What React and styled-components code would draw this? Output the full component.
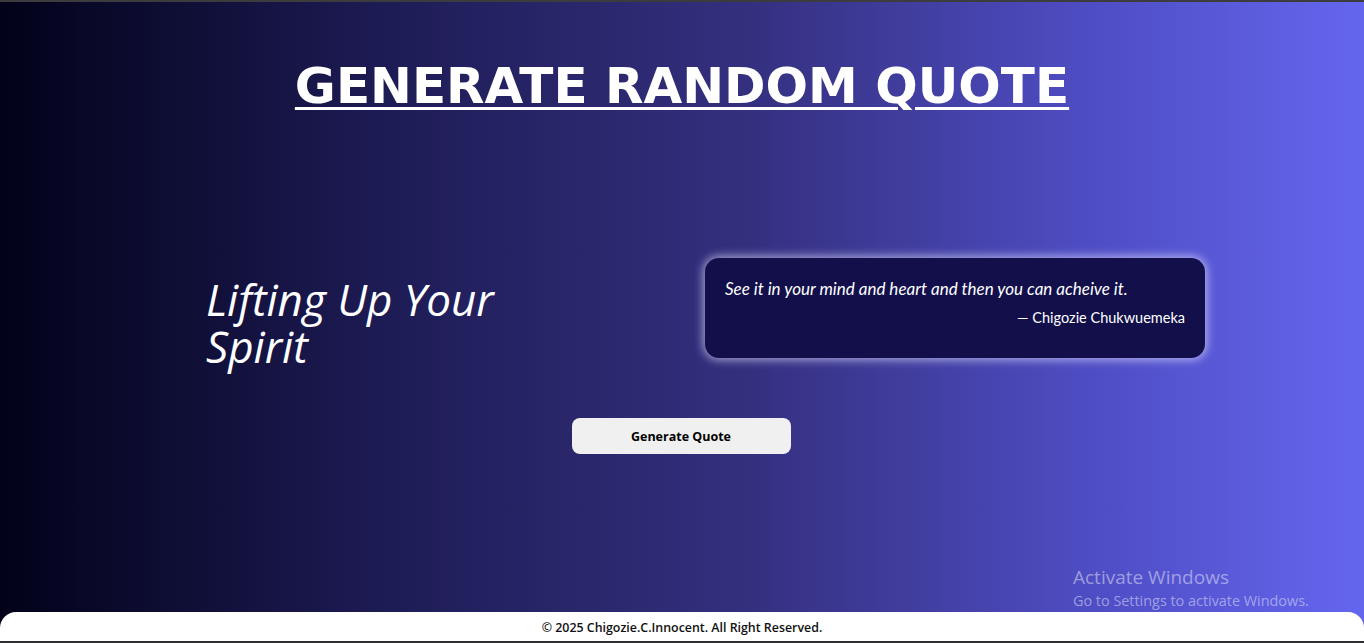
import React from "react";
import styled, { createGlobalStyle } from "styled-components";

const Global = createGlobalStyle`
  html, body { margin: 0; padding: 0; height: 100%; }
  body { font-family: "Open Sans", "DejaVu Sans", sans-serif; background: #3a3a3a; }
  #root { height: 100%; }
`;

const Page = styled.div`
  position: relative;
  box-sizing: border-box;
  height: 643px;
  border-top: 2px solid #3c3c3e;
  border-bottom: 2px solid #2e2e30;
  background: linear-gradient(to right, #02021a 0%, #1f1d58 30%, #34307f 55%, #4f4dc4 80%, #6466ee 100%);
  display: flex;
  flex-direction: column;
  overflow: hidden;
`;

const Title = styled.h1`
  margin: 56px 0 0;
  text-align: center;
  font-family: "DejaVu Sans", Verdana, sans-serif;
  font-weight: 700;
  font-size: 50px;
  line-height: 56px;
  color: #ffffff;
  text-decoration: underline;
  text-decoration-thickness: 3px;
  text-underline-offset: 4px;
`;

const Main = styled.main`
  display: flex;
  align-items: flex-start;
  margin-top: 144px;
  padding-left: 206px;
`;

const Tagline = styled.h2`
  margin: 18px 169px 0 0;
  width: 330px;
  font-family: "Open Sans", sans-serif;
  font-style: italic;
  font-weight: 400;
  font-size: 44px;
  line-height: 47px;
  color: #ffffff;
`;

const Card = styled.div`
  box-sizing: border-box;
  width: 500px;
  height: 100px;
  padding: 21px 20px 0;
  border-radius: 14px;
  background: #120f4a;
  box-shadow: 0 0 10px 2px rgba(225, 225, 255, 0.65);
  color: #ffffff;
`;

const QuoteText = styled.p`
  margin: 0;
  font-family: Lato, "Open Sans", sans-serif;
  font-style: italic;
  font-size: 17px;
  line-height: 20px;
`;

const Author = styled.p`
  margin: 10px 0 0;
  text-align: right;
  font-family: Lato, "Open Sans", sans-serif;
  font-size: 14.5px;
  line-height: 18px;
`;

const ButtonRow = styled.div`
  display: flex;
  justify-content: center;
  margin-top: 48px;
  padding-right: 2px;
`;

const Button = styled.button`
  width: 219px;
  height: 36px;
  border: none;
  border-radius: 8px;
  background: #f0f0f0;
  color: #000000;
  font-family: "Open Sans", sans-serif;
  font-weight: 700;
  font-size: 12.5px;
  cursor: pointer;
`;

const Footer = styled.footer`
  margin-top: auto;
  height: 29px;
  background: #ffffff;
  border-radius: 16px 16px 0 0;
  display: flex;
  align-items: center;
  justify-content: center;
  padding-top: 2px;
  box-sizing: border-box;
  font-family: "Open Sans", sans-serif;
  font-weight: 600;
  font-size: 12.4px;
  color: #111111;
`;

const Watermark = styled.div`
  position: absolute;
  left: 1073px;
  top: 563px;
  color: rgba(255, 255, 255, 0.45);
  font-family: "Open Sans", sans-serif;
  pointer-events: none;
`;

const WmTitle = styled.div`
  font-size: 19px;
  line-height: 25px;
`;

const WmSub = styled.div`
  font-size: 14.4px;
  line-height: 19px;
  margin-top: 1px;
`;

export default function App() {
  return (
    <>
      <Global />
      <Page>
        <Title>GENERATE RANDOM QUOTE</Title>
        <Main>
          <Tagline>Lifting Up Your Spirit</Tagline>
          <Card>
            <QuoteText>See it in your mind and heart and then you can acheive it.</QuoteText>
            <Author>— Chigozie Chukwuemeka</Author>
          </Card>
        </Main>
        <ButtonRow>
          <Button>Generate Quote</Button>
        </ButtonRow>
        <Footer>© 2025 Chigozie.C.Innocent. All Right Reserved.</Footer>
        <Watermark>
          <WmTitle>Activate Windows</WmTitle>
          <WmSub>Go to Settings to activate Windows.</WmSub>
        </Watermark>
      </Page>
    </>
  );
}
